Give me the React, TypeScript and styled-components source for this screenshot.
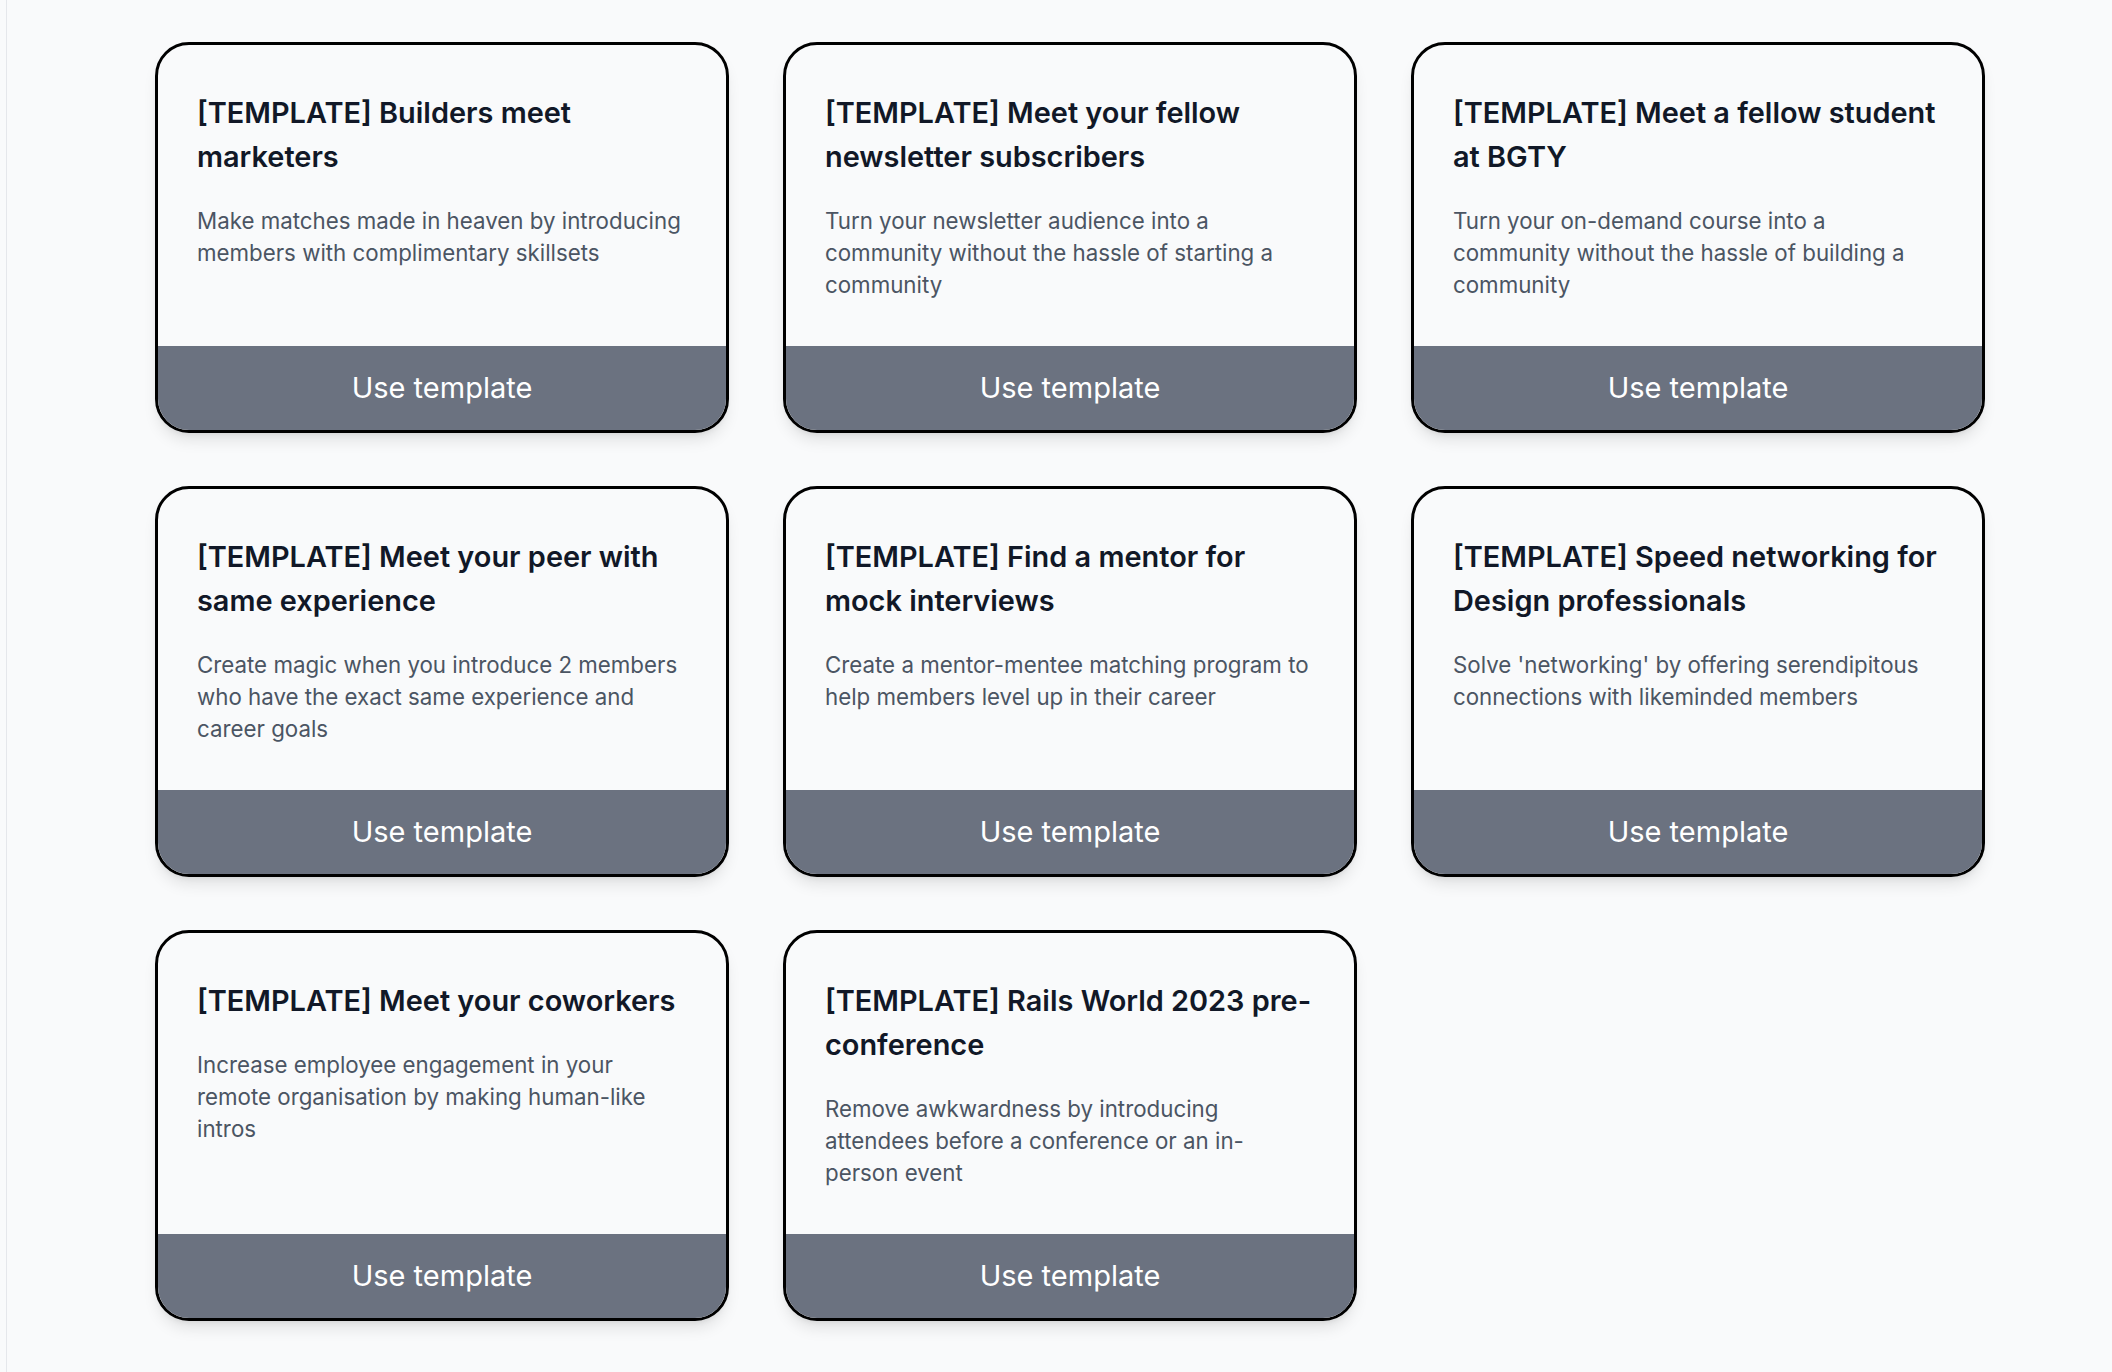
import React from 'react';
import styled, { createGlobalStyle } from 'styled-components';

interface ITemplate {
  id: string;
  title: string;
  description: string;
}

const templates: ITemplate[] = [
  {
    id: 'builders-marketers',
    title: '[TEMPLATE] Builders meet marketers',
    description: 'Make matches made in heaven by introducing members with complimentary skillsets',
  },
  {
    id: 'newsletter',
    title: '[TEMPLATE] Meet your fellow newsletter subscribers',
    description: 'Turn your newsletter audience into a community without the hassle of starting a community',
  },
  {
    id: 'student',
    title: '[TEMPLATE] Meet a fellow student at BGTY',
    description: 'Turn your on-demand course into a community without the hassle of building a community',
  },
  {
    id: 'peer',
    title: '[TEMPLATE] Meet your peer with same experience',
    description: 'Create magic when you introduce 2 members who have the exact same experience and career goals',
  },
  {
    id: 'mentor',
    title: '[TEMPLATE] Find a mentor for mock interviews',
    description: 'Create a mentor-mentee matching program to help members level up in their career',
  },
  {
    id: 'speed-networking',
    title: '[TEMPLATE] Speed networking for Design professionals',
    description: "Solve 'networking' by offering serendipitous connections with likeminded members",
  },
  {
    id: 'coworkers',
    title: '[TEMPLATE] Meet your coworkers',
    description: 'Increase employee engagement in your remote organisation by making human-like intros',
  },
  {
    id: 'rails-world',
    title: '[TEMPLATE] Rails World 2023 pre-conference',
    description: 'Remove awkwardness by introducing attendees before a conference or an in-person event',
  },
];

const GlobalStyle = createGlobalStyle`
  * {
    box-sizing: border-box;
  }
  html, body {
    margin: 0;
    padding: 0;
    background: #f9fafb;
  }
  body {
    font-family: Inter, "Noto Sans", "Liberation Sans", sans-serif;
    -webkit-font-smoothing: antialiased;
  }
`;

const Page = styled.div`
  min-height: 1372px;
  padding-left: 6px;
  background: #f9fafb;
`;

const Main = styled.main`
  min-height: 1372px;
  border-left: 1px solid #e5e7eb;
  padding: 42px 0 48px 148px;
`;

const Grid = styled.ul`
  list-style: none;
  margin: 0;
  padding: 0;
  display: grid;
  grid-template-columns: repeat(3, 574px);
  column-gap: 54px;
  row-gap: 53px;
`;

const Card = styled.li`
  display: flex;
  flex-direction: column;
  background: #f9fafb;
  border: 3px solid #000;
  border-radius: 34px;
  overflow: hidden;
  box-shadow: 0 10px 15px -3px rgba(0, 0, 0, 0.1), 0 4px 6px -4px rgba(0, 0, 0, 0.1);
`;

const Body = styled.div`
  flex: 1;
  padding: 46px 38px 45px 39px;
`;

const Title = styled.h3`
  margin: 0;
  font-size: 28.9px;
  line-height: 44px;
  font-weight: 600;
  color: #111827;
`;

const Description = styled.p`
  margin: 26px 0 0;
  font-size: 22.3px;
  line-height: 32px;
  font-weight: 400;
  color: #4b5563;
`;

const UseButton = styled.button`
  display: flex;
  align-items: center;
  justify-content: center;
  height: 84px;
  width: 100%;
  border: 0;
  margin: 0;
  padding: 0 0 2px;
  background: #6b7280;
  color: #fff;
  font-family: inherit;
  font-size: 29px;
  font-weight: 400;
  cursor: pointer;
`;

function App() {
  return (
    <Page>
      <GlobalStyle />
      <Main>
        <Grid>
          {templates.map(template => (
            <Card key={template.id}>
              <Body>
                <Title>{template.title}</Title>
                <Description>{template.description}</Description>
              </Body>
              <UseButton type="button">Use template</UseButton>
            </Card>
          ))}
        </Grid>
      </Main>
    </Page>
  );
}

export default App;
